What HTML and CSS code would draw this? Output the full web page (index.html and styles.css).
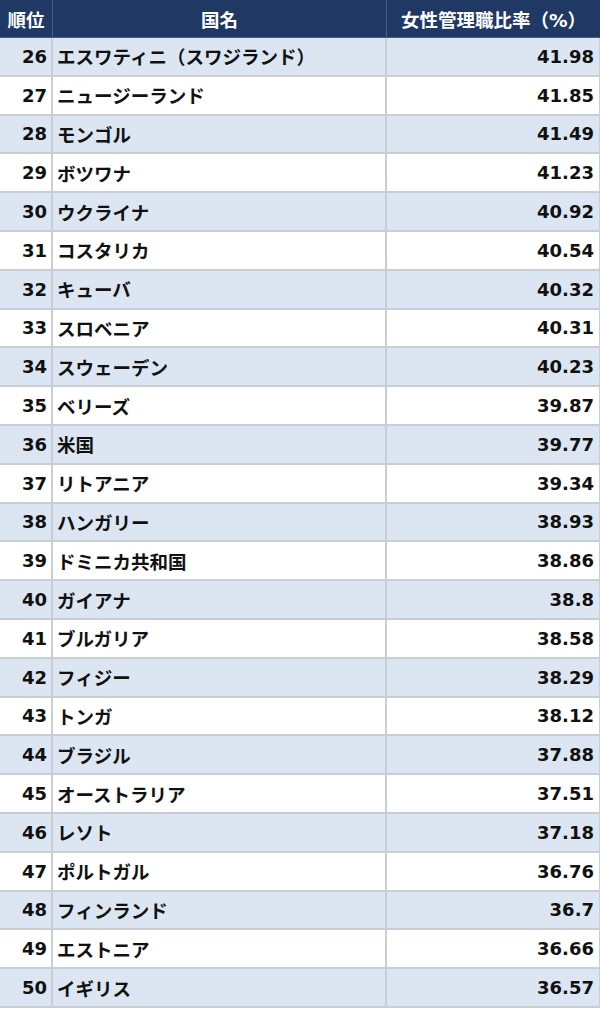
FILE: index.html
```html
<!DOCTYPE html>
<html lang="ja">
<head>
<meta charset="utf-8">
<title>女性管理職比率</title>
<link rel="stylesheet" href="styles.css">
</head>
<body>
<div class="table">
  <div class="row head">
    <div class="cell rank">順位</div>
    <div class="cell name">国名</div>
    <div class="cell val">女性管理職比率（%）</div>
  </div>
  <div class="row alt"><div class="cell rank">26</div><div class="cell name">エスワティニ（スワジランド）</div><div class="cell val">41.98</div></div>
  <div class="row"><div class="cell rank">27</div><div class="cell name">ニュージーランド</div><div class="cell val">41.85</div></div>
  <div class="row alt"><div class="cell rank">28</div><div class="cell name">モンゴル</div><div class="cell val">41.49</div></div>
  <div class="row"><div class="cell rank">29</div><div class="cell name">ボツワナ</div><div class="cell val">41.23</div></div>
  <div class="row alt"><div class="cell rank">30</div><div class="cell name">ウクライナ</div><div class="cell val">40.92</div></div>
  <div class="row"><div class="cell rank">31</div><div class="cell name">コスタリカ</div><div class="cell val">40.54</div></div>
  <div class="row alt"><div class="cell rank">32</div><div class="cell name">キューバ</div><div class="cell val">40.32</div></div>
  <div class="row"><div class="cell rank">33</div><div class="cell name">スロベニア</div><div class="cell val">40.31</div></div>
  <div class="row alt"><div class="cell rank">34</div><div class="cell name">スウェーデン</div><div class="cell val">40.23</div></div>
  <div class="row"><div class="cell rank">35</div><div class="cell name">ベリーズ</div><div class="cell val">39.87</div></div>
  <div class="row alt"><div class="cell rank">36</div><div class="cell name">米国</div><div class="cell val">39.77</div></div>
  <div class="row"><div class="cell rank">37</div><div class="cell name">リトアニア</div><div class="cell val">39.34</div></div>
  <div class="row alt"><div class="cell rank">38</div><div class="cell name">ハンガリー</div><div class="cell val">38.93</div></div>
  <div class="row"><div class="cell rank">39</div><div class="cell name">ドミニカ共和国</div><div class="cell val">38.86</div></div>
  <div class="row alt"><div class="cell rank">40</div><div class="cell name">ガイアナ</div><div class="cell val">38.8</div></div>
  <div class="row"><div class="cell rank">41</div><div class="cell name">ブルガリア</div><div class="cell val">38.58</div></div>
  <div class="row alt"><div class="cell rank">42</div><div class="cell name">フィジー</div><div class="cell val">38.29</div></div>
  <div class="row"><div class="cell rank">43</div><div class="cell name">トンガ</div><div class="cell val">38.12</div></div>
  <div class="row alt"><div class="cell rank">44</div><div class="cell name">ブラジル</div><div class="cell val">37.88</div></div>
  <div class="row"><div class="cell rank">45</div><div class="cell name">オーストラリア</div><div class="cell val">37.51</div></div>
  <div class="row alt"><div class="cell rank">46</div><div class="cell name">レソト</div><div class="cell val">37.18</div></div>
  <div class="row"><div class="cell rank">47</div><div class="cell name">ポルトガル</div><div class="cell val">36.76</div></div>
  <div class="row alt"><div class="cell rank">48</div><div class="cell name">フィンランド</div><div class="cell val">36.7</div></div>
  <div class="row"><div class="cell rank">49</div><div class="cell name">エストニア</div><div class="cell val">36.66</div></div>
  <div class="row alt"><div class="cell rank">50</div><div class="cell name">イギリス</div><div class="cell val">36.57</div></div>
</div>
</body>
</html>
```

FILE: styles.css
```css
html, body {
  margin: 0;
  padding: 0;
  background: #ffffff;
}

body {
  font-family: "DejaVu Sans", "Noto Sans CJK JP", sans-serif;
  font-weight: bold;
  color: #111111;
}

.table {
  width: 600px;
  display: flex;
  flex-direction: column;
}

.row {
  display: grid;
  grid-template-columns: 53px 334px 213px;
  height: 38.8px;
  background: #ffffff;
}

.row.alt {
  background: #dce6f2;
}

.row.head {
  height: 38px;
  background: #203864;
  color: #ffffff;
}

.cell {
  box-sizing: border-box;
  display: flex;
  align-items: center;
  border-right: 2px solid #c9ced5;
  border-bottom: 2px solid #c9ced5;
  font-size: 17px;
  white-space: nowrap;
  overflow: hidden;
}

.cell:last-child {
  border-right: 1px solid #c9ced5;
}

.head .cell {
  justify-content: center;
  border-right: 1px solid #4a5c82;
  border-bottom: 1px solid #4a5c82;
  font-size: 18.5px;
}

.head .cell:last-child {
  border-right: none;
}

.head .rank {
  padding-right: 0;
}

.head .name {
  padding-left: 0;
}

.head .val {
  padding-right: 0;
}

.rank {
  justify-content: flex-end;
  padding-right: 4px;
  font-size: 18px;
}

.name {
  padding-left: 4px;
  font-size: 18.5px;
}

.val {
  justify-content: flex-end;
  padding-right: 5px;
  font-size: 18px;
}
```
